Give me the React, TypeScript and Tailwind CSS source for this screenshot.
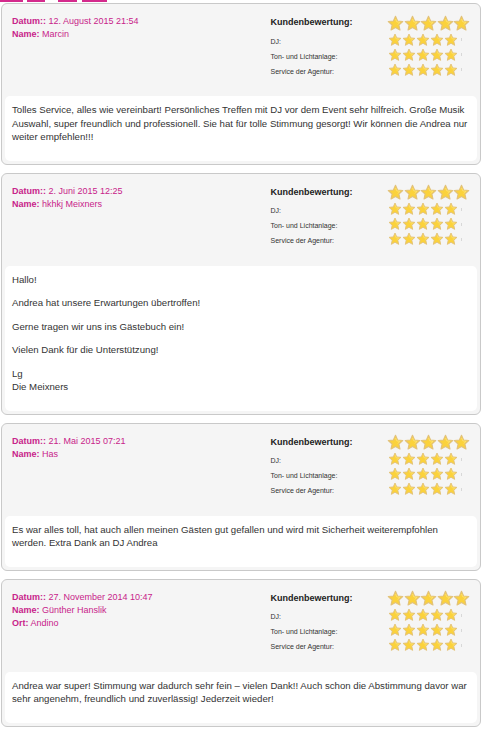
import React from "react";

type Review = {
  datum: string;
  name: string;
  ort?: string;
  text: string[][];
};

const reviews: Review[] = [
  {
    datum: "12. August 2015 21:54",
    name: "Marcin",
    text: [
      [
        "Tolles Service, alles wie vereinbart! Persönliches Treffen mit DJ vor dem Event sehr hilfreich. Große Musik Auswahl, super freundlich und professionell. Sie hat für tolle Stimmung gesorgt! Wir können die Andrea nur weiter empfehlen!!!",
      ],
    ],
  },
  {
    datum: "2. Juni 2015 12:25",
    name: "hkhkj Meixners",
    text: [
      ["Hallo!"],
      ["Andrea hat unsere Erwartungen übertroffen!"],
      ["Gerne tragen wir uns ins Gästebuch ein!"],
      ["Vielen Dank für die Unterstützung!"],
      ["Lg", "Die Meixners"],
    ],
  },
  {
    datum: "21. Mai 2015 07:21",
    name: "Has",
    text: [
      [
        "Es war alles toll, hat auch allen meinen Gästen gut gefallen und wird mit Sicherheit weiterempfohlen werden. Extra Dank an DJ Andrea",
      ],
    ],
  },
  {
    datum: "27. November 2014 10:47",
    name: "Günther Hanslik",
    ort: "Andino",
    text: [
      [
        "Andrea war super! Stimmung war dadurch sehr fein – vielen Dank!! Auch schon die Abstimmung davor war sehr angenehm, freundlich und zuverlässig! Jederzeit wieder!",
      ],
    ],
  },
];

const kategorien = ["DJ:", "Ton- und Lichtanlage:", "Service der Agentur:"];

function Star({ size }: { size: number }) {
  return (
    <svg width={size} height={size} viewBox="0 0 24 24" className="shrink-0">
      <path
        d="M12 1.8l3 6.6 7.2.8-5.4 4.9 1.5 7.1L12 17.6l-6.3 3.6 1.5-7.1-5.4-4.9 7.2-.8z"
        fill="#fbd23c"
        stroke="#e2c27a"
        strokeWidth="1.6"
        strokeLinejoin="round"
      />
      <path d="M12 5.5l1.9 4.3 4.6.5-3.5 3.1" fill="none" stroke="#fde57e" strokeWidth="1" />
    </svg>
  );
}

function Sterne({ big }: { big?: boolean }) {
  return (
    <div className="flex items-center">
      {[0, 1, 2, 3, 4].map((i) =>
        big ? (
          <div key={i} className="w-[16.5px] flex justify-center">
            <Star size={17} />
          </div>
        ) : (
          <div key={i} className="w-[14px] flex justify-center">
            <Star size={14} />
          </div>
        )
      )}
      {!big && <span className="ml-[3px] w-px h-[3px] bg-[#d8d8d8]" />}
    </div>
  );
}

function ReviewCard({ r }: { r: Review }) {
  return (
    <div className="border border-[#c9c9c9] rounded-[6px] bg-[#f5f5f5] px-[3px] pb-[3px]">
      <div className="flex justify-between pl-[7px] pr-[7px] pt-[10px] pb-[19px]">
        <div className="text-[9px] leading-[13px] text-[#c8238a] pt-[1px]">
          <div>
            <b>Datum::</b> {r.datum}
          </div>
          <div>
            <b>Name:</b> {r.name}
          </div>
          {r.ort && (
            <div>
              <b>Ort:</b> {r.ort}
            </div>
          )}
        </div>
        <div className="grid grid-cols-[117px_auto] text-[#222]">
          <div className="h-[18px] flex items-center text-[9px] font-bold">Kundenbewertung:</div>
          <div className="h-[18px] flex items-center">
            <Sterne big />
          </div>
          {kategorien.map((k) => (
            <React.Fragment key={k}>
              <div className="h-[15px] flex items-center pt-[5px] text-[7px] text-[#333]">{k}</div>
              <div className="h-[15px] flex items-center">
                <Sterne />
              </div>
            </React.Fragment>
          ))}
        </div>
      </div>
      <div className="bg-white rounded-[5px] px-[7px] pt-[7px] pb-[17px] text-[9.65px] leading-[13.5px] text-[#333] space-y-[10px]">
        {r.text.map((p, i) => (
          <p key={i}>
            {p.map((line, j) => (
              <React.Fragment key={j}>
                {j > 0 && <br />}
                {line}
              </React.Fragment>
            ))}
          </p>
        ))}
      </div>
    </div>
  );
}

export default function App() {
  return (
    <div className="w-[484px] h-[729px] overflow-hidden bg-white [font-family:'Liberation_Sans',Arial,sans-serif]">
      <div className="h-[3px] flex items-start">
        <span className="h-[2px] w-[23px] bg-[#d42a8c]" />
        <span className="h-[2px] w-[18px] ml-[4px] bg-[#d42a8c]" />
        <span className="h-[2px] w-[19px] ml-[13px] bg-[#d42a8c]" />
        <span className="h-[2px] w-[25px] ml-[5px] bg-[#d42a8c]" />
      </div>
      <div className="w-[480px] ml-[1px] flex flex-col gap-[8px]">
        {reviews.map((r) => (
          <ReviewCard key={r.datum} r={r} />
        ))}
      </div>
    </div>
  );
}
